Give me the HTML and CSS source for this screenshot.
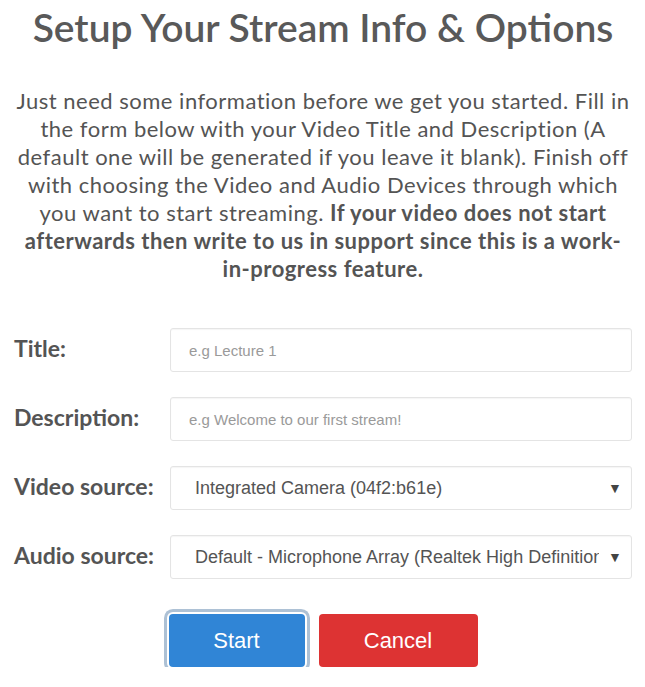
FILE: index.html
```html
<!DOCTYPE html>
<html>
<head>
<meta charset="utf-8">
<link rel="stylesheet" href="styles.css">
</head>
<body>
<div class="modal">
  <h2 class="title">Setup Your Stream Info &amp; Options</h2>
  <p class="intro">Just need some information before we get you started. Fill in the form below with your Video Title and Description (A default one will be generated if you leave it blank). Finish off with choosing the Video and Audio Devices through which you want to start streaming. <b>If your video does not start afterwards then write to us in support since this is a work-in-progress feature.</b></p>
  <div class="form">
    <label class="label">Title:</label>
    <div class="field"><span class="placeholder">e.g Lecture 1</span></div>
    <label class="label">Description:</label>
    <div class="field"><span class="placeholder">e.g Welcome to our first stream!</span></div>
    <label class="label">Video source:</label>
    <div class="field select"><span class="value">Integrated Camera (04f2:b61e)</span><span class="arrow">▼</span></div>
    <label class="label">Audio source:</label>
    <div class="field select"><span class="value">Default - Microphone Array (Realtek High Definition Audio)</span><span class="arrow">▼</span></div>
  </div>
  <div class="actions">
    <button class="btn confirm">Start</button>
    <button class="btn cancel">Cancel</button>
  </div>
</div>
</body>
</html>
```

FILE: styles.css
```css
* { box-sizing: border-box; }
html, body { margin: 0; padding: 0; background: #fff; }
body { font-family: Lato, "Noto Sans", sans-serif; color: #545454; }
.modal { width: 645px; padding: 0 13px 0 14px; }
.title {
  margin: 0;
  padding-top: 4px;
  font-size: 39px;
  font-weight: 600;
  line-height: 46px;
  text-align: center;
  color: #595959;
}
.intro {
  margin: 37px 0 0;
  font-size: 22px;
  letter-spacing: 0.5px;
  line-height: 28px;
  text-align: center;
  color: #545454;
}
.intro b { font-weight: 700; letter-spacing: 0.5px; }
.form {
  margin-top: 45px;
  display: grid;
  grid-template-columns: 156px 1fr;
  row-gap: 25px;
  align-items: center;
}
.label {
  font-size: 23px;
  font-weight: 700;
  color: #545454;
  padding-bottom: 4px;
}
.field {
  height: 44px;
  border: 1px solid #e4e4e4;
  border-radius: 3px;
  box-shadow: inset 0 1px 1px rgba(0,0,0,.04);
  display: flex;
  align-items: center;
  font-family: "Liberation Sans", Arial, sans-serif;
  overflow: hidden;
}
.placeholder {
  padding-left: 18px;
  font-size: 15px;
  color: #9a9a9a;
}
.select .value {
  flex: 1;
  padding-left: 24px;
  font-size: 18px;
  color: #545454;
  white-space: nowrap;
  overflow: hidden;
}
.select .arrow {
  width: 32px;
  padding-left: 9px;
  font-size: 14px;
  color: #444;
}
.actions {
  margin-top: 35px;
  display: flex;
  justify-content: center;
  gap: 14px;
}
.btn {
  height: 53px;
  border: 0;
  border-radius: 4px;
  color: #fff;
  font-family: "Liberation Sans", Arial, sans-serif;
  font-size: 22px;
}
.confirm {
  width: 136px;
  background: #3085d6;
  box-shadow: 0 0 0 2px #fff, 0 0 0 5px rgba(50,100,150,.4);
}
.cancel { width: 159px; background: #dd3333; }
```
